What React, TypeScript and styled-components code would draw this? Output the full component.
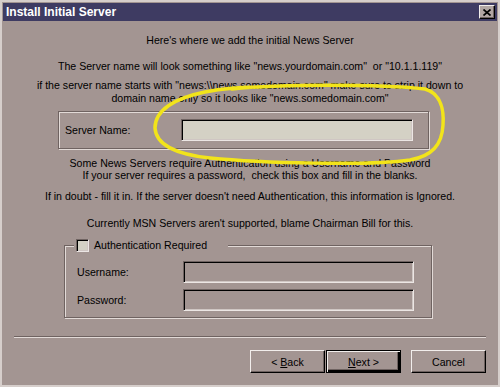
import styled, { createGlobalStyle } from "styled-components";

const GlobalStyle = createGlobalStyle`
  body {
    margin: 0;
    background: #a39592;
    font-family: "Liberation Sans", Arial, sans-serif;
    font-size: 10.6px;
    color: #000;
  }
`;

const App = () => {
  return (
    <Window>
      <GlobalStyle />
      <TitleBar>
        <span>Install Initial Server</span>
        <CloseButton>
          <svg width="8" height="7" viewBox="0 0 8 7">
            <path d="M0.5 0.5 L7.5 6.5 M7.5 0.5 L0.5 6.5" stroke="#000" strokeWidth="1.7" />
          </svg>
        </CloseButton>
      </TitleBar>

      <Content>
        <Para $mt={13}>Here's where we add the initial News Server</Para>
        <Para $mt={13}>
          The Server name will look something like "news.yourdomain.com"&nbsp; or "10.1.1.119"
        </Para>
        <Para $mt={6}>
          if the server name starts with "news:\\news.somedomain.com" make sure to strip it down to
          <br />
          domain name only so it looks like "news.somedomain.com"
        </Para>

        <ServerBox>
          <FieldLabel>Server Name:</FieldLabel>
          <TextInput $width={232} $light />
        </ServerBox>

        <Para $mt={8} $lh={12}>
          Some News Servers require Authentication using a Username and Password
          <br />
          If your server requires a password,&nbsp; check this box and fill in the blanks.
        </Para>
        <Para $mt={9}>
          If in doubt - fill it in. If the server doesn't need Authentication, this information is Ignored.
        </Para>
        <Para $mt={14}>Currently MSN Servers aren't supported, blame Chairman Bill for this.</Para>

        <AuthGroup>
          <Legend>
            <CheckBox />
            <span>Authentication Required</span>
          </Legend>
          <Row>
            <FieldLabel>Username:</FieldLabel>
            <TextInput $width={231} />
          </Row>
          <Row>
            <FieldLabel>Password:</FieldLabel>
            <TextInput $width={231} />
          </Row>
        </AuthGroup>

        <Separator />

        <ButtonRow>
          <Button>
            <span>
              &lt; <u>B</u>ack
            </span>
          </Button>
          <Button $default>
            <span>
              <u>N</u>ext &gt;
            </span>
          </Button>
          <Button $gap={10}>
            <span>Cancel</span>
          </Button>
        </ButtonRow>
      </Content>

      <Scribble viewBox="0 0 500 387" width="500" height="387">
        <path
          d="M232 89 C280 84, 380 84, 425 89 C442 94, 444 112, 443 125 C442 145, 432 156, 410 160 C370 166, 260 163, 210 158 C175 154, 156 145, 155 128 C155 110, 175 98, 205 92 C220 89, 240 87, 262 87"
          fill="none"
          stroke="#f2e41a"
          strokeWidth="3.5"
          strokeLinecap="round"
        />
      </Scribble>
    </Window>
  );
};

export default App;

const Window = styled.div`
  position: relative;
  width: 500px;
  height: 387px;
  box-sizing: border-box;
  background: #a39592;
  border: 2px solid #d6cecb;
  padding: 1px;
  display: flex;
  flex-direction: column;
  overflow: hidden;
`;

const TitleBar = styled.div`
  height: 18px;
  background: #3e3b62;
  display: flex;
  align-items: center;
  justify-content: space-between;
  padding: 0 2px 0 3px;
  color: #fff;
  font-weight: bold;
  font-size: 12px;
`;

const CloseButton = styled.div`
  width: 16px;
  height: 14px;
  box-sizing: border-box;
  background: #b1a6a3;
  border: 1px solid;
  border-color: #f2eeec #000 #000 #f2eeec;
  box-shadow: inset -1px -1px 0 #6e6260;
  display: flex;
  align-items: center;
  justify-content: center;
`;

const Content = styled.div`
  flex: 1;
  display: flex;
  flex-direction: column;
  align-items: center;
`;

const Para = styled.div<{ $mt: number; $lh?: number }>`
  margin-top: ${(p) => p.$mt}px;
  line-height: ${(p) => p.$lh ?? 13}px;
  text-align: center;
  white-space: nowrap;
`;

const ServerBox = styled.div`
  align-self: flex-start;
  margin: 6px 0 0 55px;
  width: 371px;
  height: 38px;
  box-sizing: border-box;
  border: 1px solid #6f6361;
  box-shadow: inset 1px 1px 0 #e2dad7, 1px 1px 0 #e2dad7;
  display: flex;
  align-items: center;
  justify-content: space-between;
  padding: 0 15px 0 6px;
`;

const FieldLabel = styled.span`
  line-height: 13px;
`;

const TextInput = styled.div<{ $width: number; $light?: boolean }>`
  width: ${(p) => p.$width}px;
  height: 22px;
  box-sizing: border-box;
  background: ${(p) => (p.$light ? "#d4d1c5" : "#a39592")};
  border: 1px solid;
  border-color: #6f6361 #ece6e4 #ece6e4 #6f6361;
  box-shadow: inset 1px 1px 0 #000, inset -1px -1px 0 #cfc6c3;
`;

const AuthGroup = styled.fieldset`
  align-self: flex-start;
  margin: 9px 0 0 61px;
  width: 368px;
  min-inline-size: 0;
  box-sizing: border-box;
  border: 1px solid #6f6361;
  box-shadow: inset 1px 1px 0 #e2dad7, 1px 1px 0 #e2dad7;
  padding: 9px 17px 6px 12px;
  display: flex;
  flex-direction: column;
  gap: 6px;
`;

const Legend = styled.legend`
  display: flex;
  align-items: center;
  gap: 5px;
  margin-left: -3px;
  padding: 0 21px 0 2px;
  background: #a39592;
  line-height: 13px;
`;

const CheckBox = styled.span`
  width: 13px;
  height: 13px;
  box-sizing: border-box;
  background: #d4d1c5;
  border: 1px solid;
  border-color: #6f6361 #ece6e4 #ece6e4 #6f6361;
  box-shadow: inset 1px 1px 0 #000, inset -1px -1px 0 #cfc6c3;
`;

const Row = styled.div`
  display: flex;
  align-items: center;
  justify-content: space-between;
`;

const Separator = styled.div`
  align-self: stretch;
  margin: 18px 11px 0;
  height: 1px;
  background: #6f6361;
  border-bottom: 1px solid #e2dad7;
`;

const ButtonRow = styled.div`
  align-self: stretch;
  display: flex;
  justify-content: flex-end;
  margin-top: 12px;
  padding-right: 11px;
`;

const Button = styled.div<{ $default?: boolean; $gap?: number }>`
  width: 75px;
  height: 23px;
  box-sizing: border-box;
  margin-left: ${(p) => p.$gap ?? 1}px;
  display: flex;
  align-items: center;
  justify-content: center;
  background: #a39592;
  border: 1px solid;
  border-color: ${(p) => (p.$default ? "#000" : "#f2eeec #000 #000 #f2eeec")};
  box-shadow: ${(p) =>
    p.$default
      ? "inset 1px 1px 0 #f2eeec, inset -2px -2px 0 #000, inset -3px -3px 0 #6e6260"
      : "inset -1px -1px 0 #6e6260"};
  white-space: pre;
  u {
    text-decoration: underline;
    text-underline-offset: 1px;
  }
`;

const Scribble = styled.svg`
  position: absolute;
  left: -2px;
  top: -2px;
  pointer-events: none;
`;
